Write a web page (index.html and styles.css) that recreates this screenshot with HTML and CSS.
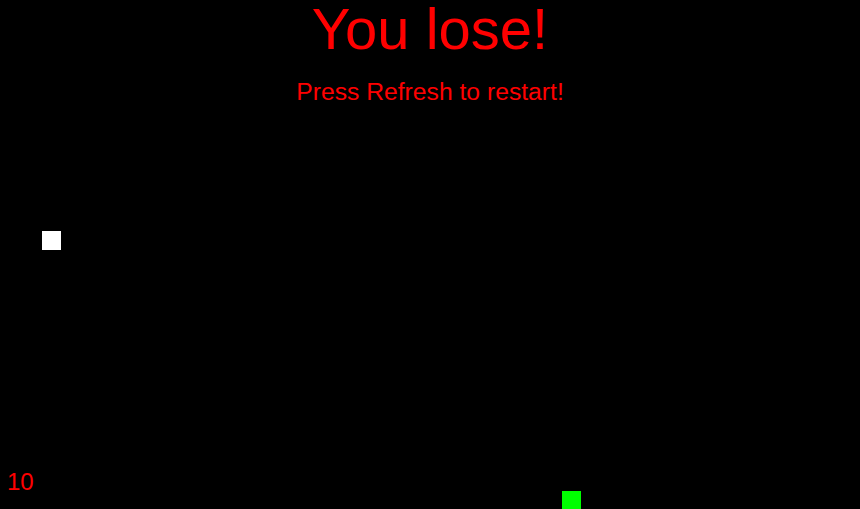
FILE: index.html
```html
<!DOCTYPE html>
<html>
<head>
<meta charset="utf-8">
<link rel="stylesheet" href="styles.css">
</head>
<body>
<div class="game">
  <div class="message">
    <h1 class="title">You lose!</h1>
    <p class="subtitle">Press Refresh to restart!</p>
  </div>
  <div class="cell snake" style="left:42px;top:231px"></div>
  <div class="cell food" style="left:562px;top:491px"></div>
  <div class="score">10</div>
</div>
</body>
</html>
```
FILE: styles.css
```css
html, body {
  margin: 0;
  padding: 0;
  background: #000;
  overflow: hidden;
}
.game {
  position: relative;
  width: 860px;
  height: 509px;
  background: #000;
  font-family: "Liberation Sans", Arial, sans-serif;
  color: #ff0000;
}
.message {
  display: flex;
  flex-direction: column;
  align-items: center;
}
.title {
  margin: 0;
  font-weight: normal;
  font-size: 58px;
  line-height: 58px;
}
.subtitle {
  margin: 19px 0 0;
  font-size: 24.7px;
  line-height: 29px;
}
.cell {
  position: absolute;
  width: 19px;
  height: 19px;
}
.snake { background: #ffffff; }
.food { background: #00ff00; }
.score {
  position: absolute;
  left: 7px;
  top: 468px;
  font-size: 24px;
  line-height: 28px;
}
```
